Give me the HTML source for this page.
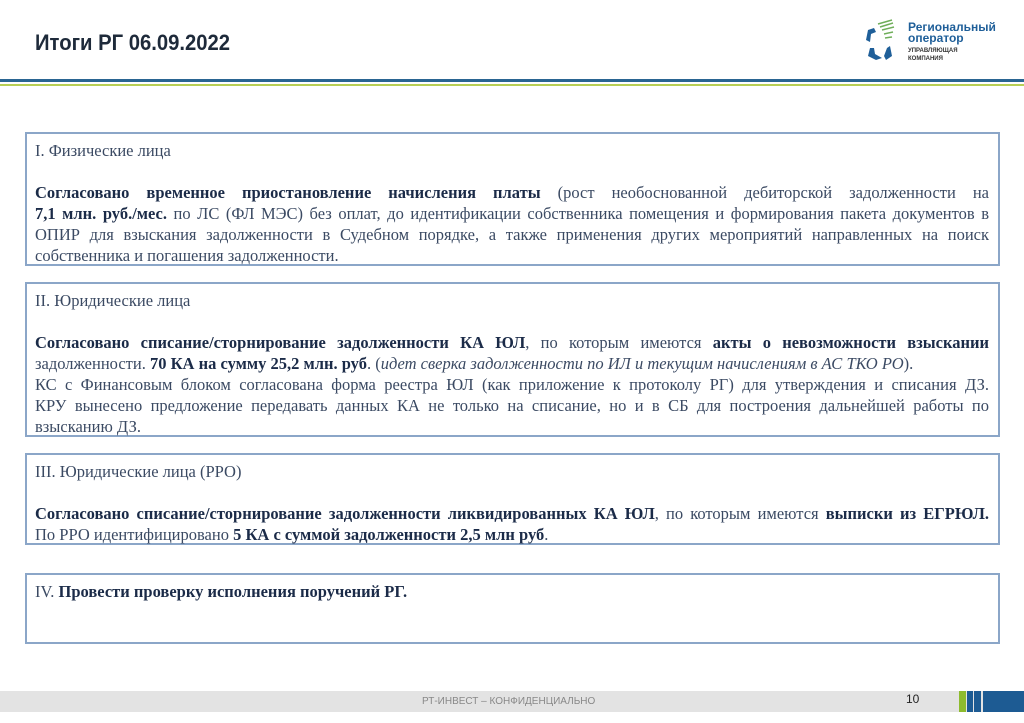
<!DOCTYPE html>
<html><head><meta charset="utf-8"><style>
body{margin:0;width:1024px;height:723px;background:#fff;position:relative;overflow:hidden;font-family:"Liberation Serif",serif}
.title{position:absolute;left:35px;top:30px;font:bold 22.5px "Liberation Sans",sans-serif;color:#1e2a3a;transform:scaleX(.9);transform-origin:left}
.l1{position:absolute;left:0;top:79px;width:1024px;height:3px;background:#2a6592}
.l2{position:absolute;left:0;top:84px;width:1024px;height:2px;background:#b8cf55}
.box{position:absolute;left:25px;width:975px;border:2px solid #8ba6c8;padding:6px 9px 0 8px;box-sizing:border-box;font-size:16.5px;line-height:21px;color:#3b4a63;text-align:justify}
.box b{color:#1b2b48}
.box p{margin:0}
.j{display:block;white-space:nowrap;text-align:justify;text-align-last:justify}
.n{display:block;white-space:nowrap}
.foot{position:absolute;left:0;top:691px;width:1024px;height:21px;background:#e3e3e3}
.ft{position:absolute;left:422px;top:696px;font:10px "Liberation Sans",sans-serif;color:#888}
.pn{position:absolute;left:906px;top:692px;font:12px "Liberation Sans",sans-serif;color:#222}
</style></head><body>
<div class="title">Итоги РГ 06.09.2022</div>
<svg style="position:absolute;left:862px;top:18px" width="150" height="48">
<path d="M12 10 L6 12 L4 22 L8 24 L9 16 L14 14Z" fill="#1f5f99"/>
<path d="M8 30 L6 38 L14 42 L20 40 L13 36 L12 30Z" fill="#1f5f99"/>
<path d="M28 28 L30 38 L24 42 L22 38 L25 30Z" fill="#1f5f99"/>
<path d="M16 6 L30 2 M18 9 L31 5 M20 12 L32 9 M22 16 L31 14 M23 20 L30 19" stroke="#6fae5a" stroke-width="1.5"/>
<text x="46" y="13" font-family="Liberation Sans" font-weight="bold" font-size="12" fill="#1f5f99">Региональный</text>
<text x="46" y="24" font-family="Liberation Sans" font-weight="bold" font-size="12" fill="#1f5f99">оператор</text>
<text x="46" y="34" font-family="Liberation Sans" font-weight="bold" font-size="6" fill="#333">УПРАВЛЯЮЩАЯ</text>
<text x="46" y="42" font-family="Liberation Sans" font-weight="bold" font-size="6" fill="#333">КОМПАНИЯ</text>
</svg>
<div class="l1"></div><div class="l2"></div>
<div class="box" style="top:132px;height:134px"><p>I. Физические лица</p><p>&nbsp;</p><p>
<span class="j"><b>Согласовано временное приостановление начисления платы</b> (рост необоснованной дебиторской задолженности на</span>
<span class="j"><b>7,1 млн. руб./мес.</b> по ЛС (ФЛ МЭС) без оплат, до идентификации собственника помещения и формирования пакета документов в</span>
<span class="j">ОПИР для взыскания задолженности в Судебном порядке, а также применения других мероприятий направленных на поиск</span>
<span class="n">собственника и погашения задолженности.</span></p></div>
<div class="box" style="top:282px;height:155px"><p>II. Юридические лица</p><p>&nbsp;</p><p>
<span class="j"><b>Согласовано списание/сторнирование задолженности КА ЮЛ</b>, по которым имеются <b>акты о невозможности взыскании</b></span>
<span class="n">задолженности. <b>70 КА на сумму 25,2 млн. руб</b>. (<i>идет сверка задолженности по ИЛ и текущим начислениям в АС ТКО РО</i>).</span>
<span class="j">КС с Финансовым блоком согласована форма реестра ЮЛ (как приложение к протоколу РГ) для утверждения и списания ДЗ.</span>
<span class="j">КРУ вынесено предложение передавать данных КА не только на списание, но и в СБ для построения дальнейшей работы по</span>
<span class="n">взысканию ДЗ.</span></p></div>
<div class="box" style="top:453px;height:92px"><p>III. Юридические лица (РРО)</p><p>&nbsp;</p><p>
<span class="j"><b>Согласовано списание/сторнирование задолженности ликвидированных КА ЮЛ</b>, по которым имеются <b>выписки из ЕГРЮЛ.</b></span>
<span class="n">По РРО идентифицировано <b>5 КА с суммой задолженности 2,5 млн руб</b>.</span></p></div>
<div class="box" style="top:573px;height:71px"><p>IV. <b>Провести проверку исполнения поручений РГ.</b></p></div>
<div class="foot"></div>
<div class="ft">РТ-ИНВЕСТ – КОНФИДЕНЦИАЛЬНО</div>
<div class="pn">10</div>
<div style="position:absolute;left:959px;top:691px;width:7px;height:21px;background:#8dbb2e"></div>
<div style="position:absolute;left:967px;top:691px;width:6px;height:21px;background:#1d5b93"></div>
<div style="position:absolute;left:974px;top:691px;width:7px;height:21px;background:#1d5b93"></div>
<div style="position:absolute;left:983px;top:691px;width:41px;height:21px;background:#1d5b93"></div>
</body></html>
